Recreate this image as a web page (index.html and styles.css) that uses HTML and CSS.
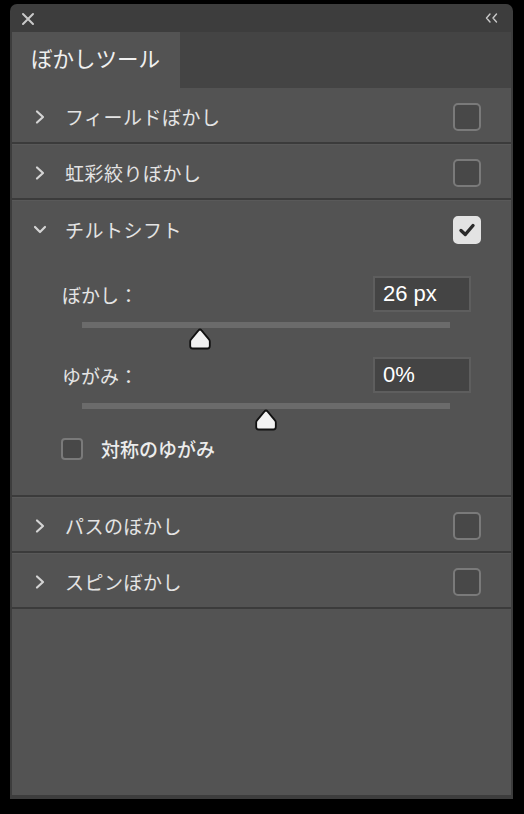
FILE: index.html
```html
<!DOCTYPE html>
<html lang="ja">
<head>
    <meta charset="UTF-8">
    <meta name="viewport" content="width=device-width, initial-scale=1.0">
    <title>ぼかしツール</title>
    <link rel="stylesheet" href="styles.css">
</head>
<body>
    <div class="panel">
        <div class="title-bar">
            <svg class="close-icon" width="14" height="14" viewBox="0 0 14 14">
                <path d="M2 2 L12 12 M12 2 L2 12" stroke="#c9c9c9" stroke-width="2" stroke-linecap="round"/>
            </svg>
            <svg class="collapse-icon" width="14" height="10" viewBox="0 0 14 10">
                <path d="M5 1 L1.5 5 L5 9 M11.5 1 L8 5 L11.5 9" stroke="#c9c9c9" stroke-width="1.4" fill="none" stroke-linecap="round" stroke-linejoin="round"/>
            </svg>
        </div>
        <div class="tab-strip">
            <div class="tab">ぼかしツール</div>
        </div>

        <div class="panel-body">
            <div class="row">
                <svg class="chevron" width="14" height="16" viewBox="0 0 14 16">
                    <path d="M4 2.5 L10 8 L4 13.5" stroke="#d4d4d4" stroke-width="2.2" fill="none" stroke-linecap="round" stroke-linejoin="round"/>
                </svg>
                <span class="row-label">フィールドぼかし</span>
                <span class="checkbox"></span>
            </div>
            <div class="row">
                <svg class="chevron" width="14" height="16" viewBox="0 0 14 16">
                    <path d="M4 2.5 L10 8 L4 13.5" stroke="#d4d4d4" stroke-width="2.2" fill="none" stroke-linecap="round" stroke-linejoin="round"/>
                </svg>
                <span class="row-label">虹彩絞りぼかし</span>
                <span class="checkbox"></span>
            </div>
            <div class="section">
                <div class="row row-open">
                    <svg class="chevron" width="14" height="16" viewBox="0 0 14 16">
                        <path d="M2 5 L7 10 L12 5" stroke="#d4d4d4" stroke-width="2.2" fill="none" stroke-linecap="round" stroke-linejoin="round"/>
                    </svg>
                    <span class="row-label">チルトシフト</span>
                    <span class="checkbox checked">
                        <svg width="20" height="20" viewBox="0 0 20 20">
                            <path d="M4 10.5 L8.3 14.5 L16 5.5" stroke="#2b2b2b" stroke-width="3.4" fill="none" stroke-linecap="round" stroke-linejoin="round"/>
                        </svg>
                    </span>
                </div>
                <div class="section-content">
                    <div class="field">
                        <div class="field-head">
                            <span class="field-label">ぼかし：</span>
                            <div class="value-box">26 px</div>
                        </div>
                        <div class="slider">
                            <div class="track"></div>
                            <svg class="thumb" style="left: 32%" width="24" height="24" viewBox="0 0 24 24">
                                <path d="M12 2.5 Q12.8 2.5 13.5 3.4 L21 12.4 Q21.8 13.3 21.8 14.6 V19 Q21.8 21.5 19.3 21.5 H4.7 Q2.2 21.5 2.2 19 V14.6 Q2.2 13.3 3 12.4 L10.5 3.4 Q11.2 2.5 12 2.5 Z" fill="#f2f2f2" stroke="#111" stroke-width="1.8" stroke-linejoin="round"/>
                            </svg>
                        </div>
                    </div>
                    <div class="field">
                        <div class="field-head">
                            <span class="field-label">ゆがみ：</span>
                            <div class="value-box">0%</div>
                        </div>
                        <div class="slider">
                            <div class="track"></div>
                            <svg class="thumb" style="left: 50%" width="24" height="24" viewBox="0 0 24 24">
                                <path d="M12 2.5 Q12.8 2.5 13.5 3.4 L21 12.4 Q21.8 13.3 21.8 14.6 V19 Q21.8 21.5 19.3 21.5 H4.7 Q2.2 21.5 2.2 19 V14.6 Q2.2 13.3 3 12.4 L10.5 3.4 Q11.2 2.5 12 2.5 Z" fill="#f2f2f2" stroke="#111" stroke-width="1.8" stroke-linejoin="round"/>
                            </svg>
                        </div>
                    </div>
                    <label class="option">
                        <span class="checkbox small"></span>
                        <span class="option-label">対称のゆがみ</span>
                    </label>
                </div>
            </div>
            <div class="row">
                <svg class="chevron" width="14" height="16" viewBox="0 0 14 16">
                    <path d="M4 2.5 L10 8 L4 13.5" stroke="#d4d4d4" stroke-width="2.2" fill="none" stroke-linecap="round" stroke-linejoin="round"/>
                </svg>
                <span class="row-label">パスのぼかし</span>
                <span class="checkbox"></span>
            </div>
            <div class="row">
                <svg class="chevron" width="14" height="16" viewBox="0 0 14 16">
                    <path d="M4 2.5 L10 8 L4 13.5" stroke="#d4d4d4" stroke-width="2.2" fill="none" stroke-linecap="round" stroke-linejoin="round"/>
                </svg>
                <span class="row-label">スピンぼかし</span>
                <span class="checkbox"></span>
            </div>
        </div>
    </div>
</body>
</html>
```

FILE: styles.css
```css
body, html {
    margin: 0;
    padding: 0;
    background-color: #000;
    font-family: 'Noto Sans CJK JP', 'Noto Sans', sans-serif;
    color: #e6e6e6;
}

.panel {
    margin: 4px 0 0 10px;
    width: 503px;
    height: 795px;
    background-color: #3d3d3d;
    border-radius: 7px 7px 0 0;
    display: flex;
    flex-direction: column;
    padding: 0 2px 4px 2px;
    box-sizing: border-box;
    overflow: hidden;
}

.title-bar {
    height: 28px;
    display: flex;
    align-items: center;
    justify-content: space-between;
    padding: 2px 12px 0 9px;
    box-sizing: border-box;
}

.close-icon {
    display: block;
}

.collapse-icon {
    display: block;
    margin-top: -2px;
}

.tab-strip {
    height: 56px;
    background-color: #444;
    display: flex;
}

.tab {
    width: 168px;
    background-color: #535353;
    font-size: 21.5px;
    color: #f0f0f0;
    padding-left: 19px;
    line-height: 52px;
    box-sizing: border-box;
}

.panel-body {
    flex: 1;
    background-color: #535353;
}

.row {
    height: 56px;
    display: flex;
    align-items: center;
    border-bottom: 2px solid #3b3b3b;
    box-shadow: inset 0 1px 0 #595959;
    padding: 3px 30px 0 21px;
    box-sizing: border-box;
}

.panel-body > .row:first-child {
    box-shadow: none;
}

.chevron {
    display: block;
    flex-shrink: 0;
}

.row-label {
    flex: 1;
    margin-left: 18px;
    font-size: 19px;
    letter-spacing: 0.5px;
    color: #e4e4e4;
}

.checkbox {
    width: 28px;
    height: 28px;
    box-sizing: border-box;
    border: 2px solid #7a7a7a;
    border-radius: 5px;
    background-color: #484848;
    display: flex;
    align-items: center;
    justify-content: center;
    flex-shrink: 0;
}

.checkbox.checked {
    background-color: #e3e3e3;
    border-color: #e3e3e3;
}

.checkbox.small {
    width: 22px;
    height: 22px;
    border-radius: 4px;
}

.section {
    border-bottom: 2px solid #3b3b3b;
}

.section .row-open {
    border-bottom: none;
}

.section-content {
    height: 239px;
    padding: 20px 40px 0 50px;
    box-sizing: border-box;
    display: flex;
    flex-direction: column;
}

.field-head {
    display: flex;
    align-items: center;
    justify-content: space-between;
}

.field-label {
    font-size: 19px;
    color: #e4e4e4;
}

.value-box {
    width: 98px;
    height: 36px;
    box-sizing: border-box;
    border: 2px solid #5e5e5e;
    background-color: #444;
    color: #fff;
    font-family: 'Liberation Sans', Arial, sans-serif;
    font-size: 22px;
    line-height: 32px;
    padding-left: 8px;
}

.slider {
    position: relative;
    margin: 10px 21px 0 20px;
    height: 35px;
}

.field:nth-child(2) .slider {
    height: 32px;
}

.track {
    height: 6px;
    background-color: #6b6b6b;
}

.thumb {
    position: absolute;
    top: 5px;
    margin-left: -12px;
    display: block;
}

.option {
    display: flex;
    align-items: center;
    margin-left: -1px;
}

.option-label {
    margin-left: 18px;
    font-size: 19px;
    font-weight: 500;
    color: #ececec;
}
```
